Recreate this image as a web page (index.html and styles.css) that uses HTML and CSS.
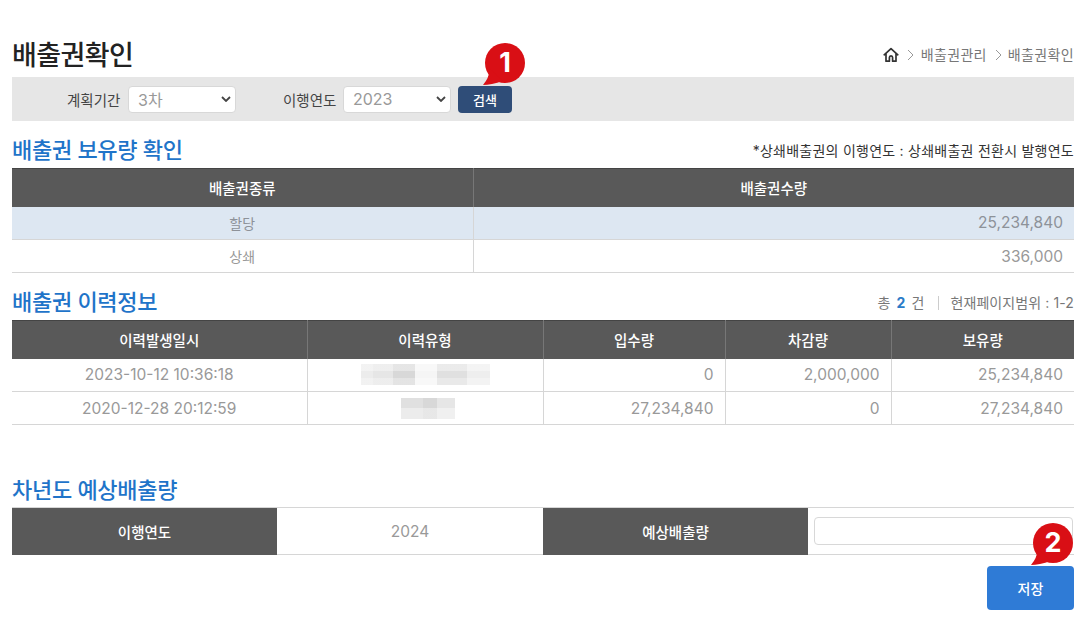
FILE: index.html
```html
<!DOCTYPE html>
<html lang="ko">
<head>
<meta charset="utf-8">
<title>배출권확인</title>
<link rel="stylesheet" href="styles.css">
</head>
<body>
<main class="page">
  <header class="title-row">
    <h1>배출권확인</h1>
    <nav class="crumbs">
      <svg class="home" viewBox="0 0 16 16" width="16" height="16"><path d="M1.2 7.800 8 1.600l6.800 6.200M3 6.800v7.400h3.400v-3.600c0-2.200 3.200-2.200 3.200 0v3.600H13V6.800" fill="none" stroke="#333" stroke-width="1.700" stroke-linejoin="round" stroke-linecap="round"/></svg>
      <svg class="chev" viewBox="0 0 7 12" width="7" height="12"><path d="M1 1l5 5-5 5" fill="none" stroke="#999" stroke-width="1"/></svg><span>배출권관리</span><svg class="chev chev-2" viewBox="0 0 7 12" width="7" height="12"><path d="M1 1l5 5-5 5" fill="none" stroke="#999" stroke-width="1"/></svg><span>배출권확인</span>
    </nav>
  </header>

  <section class="filter">
    <label class="f-label f-label-a">계획기간</label>
    <div class="select select-a"><span>3차</span><svg viewBox="0 0 10 6" width="10" height="6"><path d="M1 1l4 4 4-4" fill="none" stroke="#444" stroke-width="1.800"/></svg></div>
    <label class="f-label f-label-b">이행연도</label>
    <div class="select select-b"><span>2023</span><svg viewBox="0 0 10 6" width="10" height="6"><path d="M1 1l4 4 4-4" fill="none" stroke="#444" stroke-width="1.800"/></svg></div>
    <div class="btn-wrap">
      <button class="btn-search">검색</button>
      <div class="badge badge-one"><svg viewBox="0 0 44 42" width="44" height="42"><circle cx="24" cy="20" r="20" fill="#d90f15"/><path d="M2 42Q8 35 9 26L22 38Q10 42 2 42Z" fill="#d90f15"/></svg><b>1</b></div>
    </div>
  </section>

  <div class="sec-head sec-first">
    <h2>배출권 보유량 확인</h2>
    <p class="note">*상쇄배출권의 이행연도 : 상쇄배출권 전환시 발행연도</p>
  </div>
  <table class="grid t1">
    <thead><tr><th class="c1">배출권종류</th><th>배출권수량</th></tr></thead>
    <tbody>
      <tr class="hl"><td class="ctr">할당</td><td class="num">25,234,840</td></tr>
      <tr><td class="ctr">상쇄</td><td class="num">336,000</td></tr>
    </tbody>
  </table>

  <div class="sec-head sec-second">
    <h2>배출권 이력정보</h2>
    <p class="count">총 <b>2</b> 건<i></i>현재페이지범위 : 1-2</p>
  </div>
  <table class="grid t2">
    <thead><tr><th class="c1">이력발생일시</th><th class="c2">이력유형</th><th class="c3">입수량</th><th class="c4">차감량</th><th>보유량</th></tr></thead>
    <tbody>
      <tr>
        <td class="ctr">2023-10-12 10:36:18</td>
        <td class="ctr"><span class="mosaic mosaic-long"></span></td>
        <td class="num">0</td><td class="num">2,000,000</td><td class="num">25,234,840</td>
      </tr>
      <tr>
        <td class="ctr">2020-12-28 20:12:59</td>
        <td class="ctr"><span class="mosaic mosaic-short"></span></td>
        <td class="num">27,234,840</td><td class="num">0</td><td class="num">27,234,840</td>
      </tr>
    </tbody>
  </table>

  <div class="sec-head sec-third"><h2>차년도 예상배출량</h2></div>
  <table class="grid t3">
    <tbody>
      <tr>
        <th class="c1">이행연도</th><td class="ctr c2">2024</td>
        <th class="c3">예상배출량</th><td class="input-cell"><div class="input"></div></td>
      </tr>
    </tbody>
  </table>

  <div class="actions">
    <button class="btn-save">저장</button>
    <div class="badge badge-two"><svg viewBox="0 0 44 42" width="44" height="42"><circle cx="24" cy="20" r="20" fill="#d90f15"/><path d="M2 42Q8 35 9 26L22 38Q10 42 2 42Z" fill="#d90f15"/></svg><b>2</b></div>
  </div>
</main>
</body>
</html>
```
FILE: styles.css
```css
* { box-sizing: border-box; }
html, body { margin: 0; padding: 0; background: #fff; }
body {
  width: 1080px;
  height: 625px;
  overflow: hidden;
  font-family: Inter, "Noto Sans CJK KR", sans-serif;
  color: #777;
}
.page { padding: 0 6px 0 12px; }

.title-row { height: 77px; display: flex; justify-content: space-between; align-items: flex-end; padding-bottom: 3px; }
h1 { margin: 0; font-size: 27px; line-height: 36px; font-weight: 500; color: #222; letter-spacing: -0.6px; }
.crumbs { display: flex; align-items: center; font-size: 14px; line-height: 20px; color: #777; padding-bottom: 9px; letter-spacing: 0.35px; }
.home { margin-right: 8px; }
.chev { margin-right: 7px; }
.chev-2 { margin-left: 8px; margin-right: 6px; }

.filter { height: 44px; background: #e6e6e6; display: flex; align-items: center; }
.f-label { font-size: 14.500px; color: #444; letter-spacing: 0; }
.f-label-a { margin-left: 55px; width: 61px; }
.f-label-b { margin-left: 47px; width: 60px; }
.select { width: 108px; height: 27px; background: #fff; border: 1px solid #d8d8d8; border-radius: 4px; display: flex; align-items: center; justify-content: space-between; padding: 0 4px 0 9px; font-size: 16px; color: #999; }
.btn-wrap { position: relative; margin-left: 7px; }
.btn-search { display: block; width: 54px; height: 27px; border: 0; border-radius: 4px; background: #2f4d78; color: #fff; font: 500 13px "Noto Sans CJK KR", sans-serif; padding: 0; }

.badge { position: absolute; width: 44px; height: 42px; }
.badge svg { display: block; }
.badge b { position: absolute; left: 4px; width: 40px; top: 0; text-align: center; color: #fff; font: 700 27px/40px Inter, sans-serif; }
.badge-one { left: 23px; top: -43px; }
.badge-two { right: 1px; top: -32px; }

.sec-head { display: flex; justify-content: space-between; align-items: flex-end; }
.sec-first { height: 47px; }
.sec-second { height: 47px; }
.sec-third { height: 82px; }
h2 { margin: 0; font-size: 22px; line-height: 30px; font-weight: 500; color: #1f74c9; letter-spacing: -0.3px; padding-bottom: 3px; }
.sec-third h2 { padding-bottom: 2px; }
.note { margin: 0 0 7px; font-size: 14px; line-height: 20px; color: #333; letter-spacing: 0.25px; }
.count { margin: 0 0 7px; font-size: 14px; line-height: 20px; color: #777; display: flex; align-items: center; white-space: pre; letter-spacing: 0.1px; }
.count b { color: #2b7bc8; font-weight: 700; margin: 0 2px; }
.count i { display: block; width: 1px; height: 14px; background: #ccc; margin: 0 11px 0 14px; }

.grid { width: 1062px; border-collapse: collapse; table-layout: fixed; }
.grid th { background: #595959; color: #fff; font-size: 14.500px; font-weight: 500; padding: 0; text-align: center; }
.grid thead th + th { border-left: 1px solid #777; }
.grid thead { border-top: 1px solid #444; }
.grid td { font-size: 15.500px; color: #999; padding: 0; border-bottom: 1px solid #d6d6d6; }
.grid td + td { border-left: 1px solid #d6d6d6; }
.ctr { text-align: center; }
.num { text-align: right; padding-right: 11px !important; }
.t1 thead tr { height: 38px; }
.t1 tbody tr { height: 33px; }
.t1 .ctr { font-size: 14px; }
.t1 .c1 { width: 461px; }
.hl td { background: #dde7f2; color: #8d9299; }
.t2 thead tr { height: 38px; }
.t2 tbody tr { height: 33px; }
.t2 .c1 { width: 295px; }
.t2 .c2 { width: 236px; }
.t2 .c3 { width: 182px; }
.t2 .c4 { width: 166px; }

.t3 { border-top: 1px solid #d6d6d6; }
.t3 tr { height: 47px; }
.t3 .c1 { width: 265px; }
.t3 .c2 { width: 266px; }
.t3 .c3 { width: 265px; }
.t3 td { border-left: 0 !important; }
.input-cell { padding: 0 1px 0 6px !important; }
.input { height: 28px; border: 1px solid #d8d8d8; border-radius: 4px; background: #fff; }

.mosaic { display: block; height: 21px; }
.mosaic-long {
  width: 129px;
  margin: 0 auto;
  background:
    linear-gradient(180deg, rgba(255,255,255,0.35) 0 7px, rgba(255,255,255,0) 7px 14px, rgba(255,255,255,0.3) 14px 21px),
    linear-gradient(90deg, #ececec 0 12px, #e6e6e6 12px 32px, #d8d8d8 32px 54px, #f5f5f5 54px 76px, #e0e0e0 76px 106px, #eeeeee 106px 129px);
}
.mosaic-short {
  width: 54px;
  margin-left: 93px;
  background:
    linear-gradient(180deg, rgba(255,255,255,0) 0 10px, rgba(255,255,255,0.4) 10px 21px),
    linear-gradient(90deg, #e0e0e0 0 22px, #d8d8d8 22px 36px, #e6e6e6 36px 54px);
}

.actions { position: relative; display: flex; justify-content: flex-end; padding-top: 11px; }
.btn-save { width: 87px; height: 44px; border: 0; border-radius: 4px; background: #2f7bd6; color: #fff; font: 500 14px "Noto Sans CJK KR", sans-serif; padding: 0; }
```
